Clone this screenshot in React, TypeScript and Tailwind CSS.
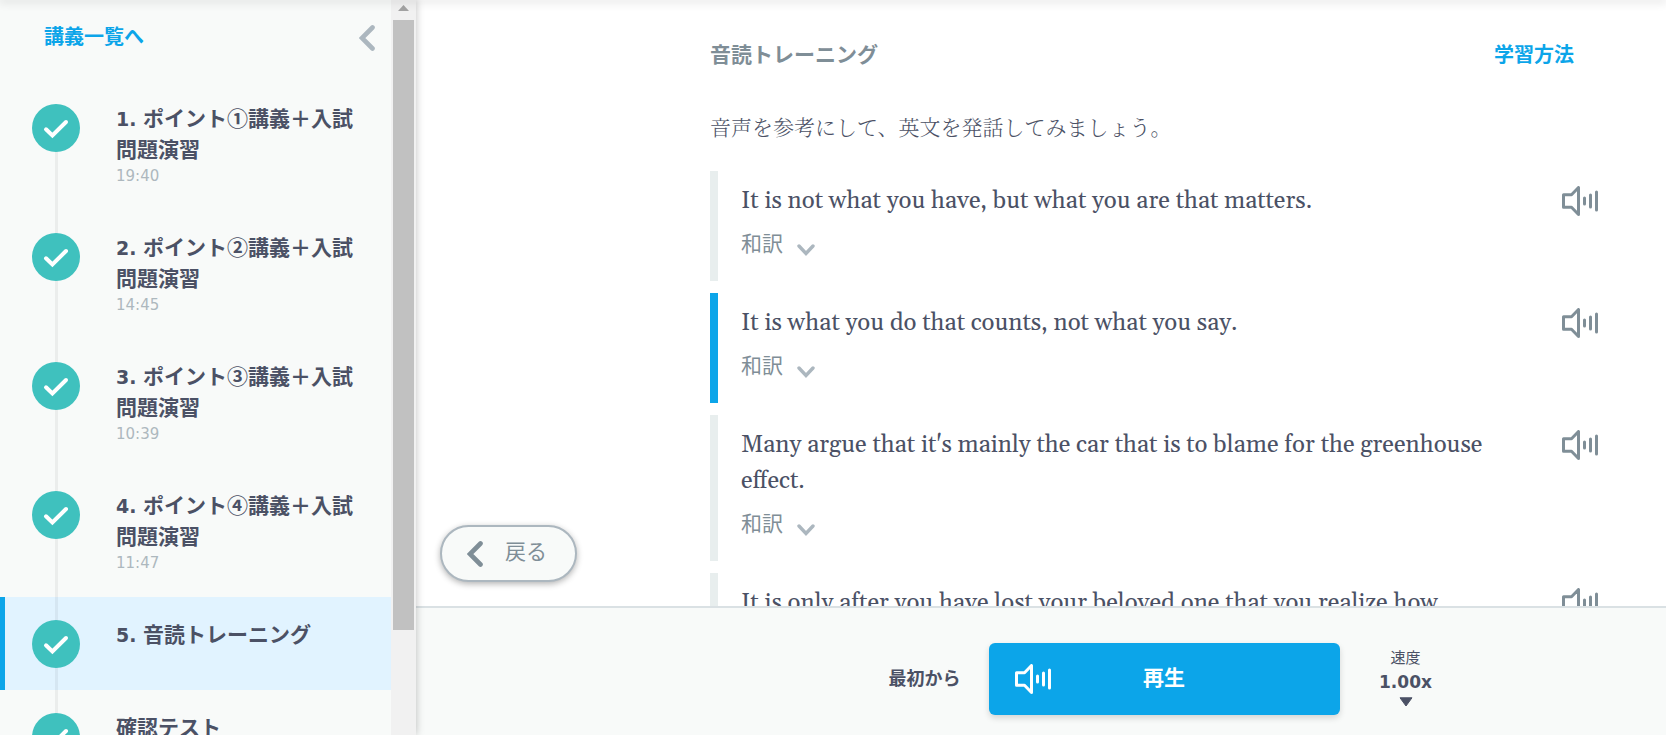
import { useState } from "react";
import clsx from "clsx";

type Lesson = {
  no?: string;
  title: string;
  time?: string;
  active?: boolean;
};

type Sentence = {
  text: string;
  translation: string;
};

const lessons: Lesson[] = [
  { no: "1.", title: "ポイント①講義＋入試問題演習", time: "19:40" },
  { no: "2.", title: "ポイント②講義＋入試問題演習", time: "14:45" },
  { no: "3.", title: "ポイント③講義＋入試問題演習", time: "10:39" },
  { no: "4.", title: "ポイント④講義＋入試問題演習", time: "11:47" },
  { no: "5.", title: "音読トレーニング", active: true },
  { title: "確認テスト" },
];

const sentences: Sentence[] = [
  {
    text: "It is not what you have, but what you are that matters.",
    translation: "和訳",
  },
  {
    text: "It is what you do that counts, not what you say.",
    translation: "和訳",
  },
  {
    text: "Many argue that it's mainly the car that is to blame for the greenhouse effect.",
    translation: "和訳",
  },
  {
    text: "It is only after you have lost your beloved one that you realize how",
    translation: "和訳",
  },
];

function SpeakerIcon({ className }: { className?: string }) {
  return (
    <svg
      viewBox="0 0 36 30"
      className={clsx("h-[30px] w-9 shrink-0", className)}
      fill="none"
      stroke="currentColor"
      strokeWidth="3"
      strokeLinecap="round"
      strokeLinejoin="round"
      aria-hidden="true">
      <path d="M16.5 1.5v27L9.5 21.3h-8V8.7h8z" />
      <path d="M22.5 12v6M28.5 9v12M34.5 6v18" />
    </svg>
  );
}

function ChevronLeftIcon({ className }: { className?: string }) {
  return (
    <svg
      viewBox="0 0 16 26"
      className={clsx("h-[26px] w-4 shrink-0", className)}
      fill="none"
      stroke="currentColor"
      strokeWidth="4.6"
      strokeLinecap="round"
      aria-hidden="true">
      <path d="M13.5 2.5 3 13l10.5 10.5" />
    </svg>
  );
}

function CheckBadge() {
  return (
    <svg viewBox="0 0 48 48" className="relative size-12" aria-hidden="true">
      <circle cx="24" cy="24" r="24" fill="#3fc1be" />
      <path
        d="M14 25.3 20.4 31.5 34 18"
        fill="none"
        stroke="#fff"
        strokeWidth="4"
        strokeLinecap="round"
      />
    </svg>
  );
}

function LessonItem({ lesson, first }: { lesson: Lesson; first: boolean }) {
  return (
    <li>
      <a
        href="#"
        className={clsx(
          "flex border-l-[5px]",
          lesson.time ? "min-h-[129px]" : "min-h-[93px]",
          lesson.active
            ? "border-[#0ca5e9] bg-[#e1f3ff]"
            : "border-transparent",
        )}>
        <div className="relative ml-[27px] w-12 shrink-0 pt-[23px]">
          <span
            className={clsx(
              "absolute bottom-0 left-[23px] w-[3px] bg-black/5",
              first ? "top-12" : "top-0",
            )}
          />
          <CheckBadge />
        </div>
        <div className="ml-9 flex-1 pt-[21px] pr-8">
          <p className="font-['Noto_Sans_CJK_JP',sans-serif] text-[21px] leading-[31px] font-bold text-[#4b5165]">
            {lesson.no && (
              <span className="font-['DejaVu_Sans',sans-serif] text-[19px] leading-none">
                {lesson.no}{" "}
              </span>
            )}
            {lesson.title}
          </p>
          {lesson.time && (
            <p className="text-[15px] leading-6 text-[#adb8be]">
              {lesson.time}
            </p>
          )}
        </div>
      </a>
    </li>
  );
}

export default function App() {
  const [current, setCurrent] = useState(1);
  const [speed, setSpeed] = useState("1.00x");

  return (
    <div className="relative flex h-screen overflow-hidden bg-white font-['DejaVu_Sans','Noto_Sans_CJK_JP',sans-serif] text-[#4b5165]">
      <div className="absolute inset-x-0 top-0 z-30 h-0 shadow-[0_0_10px_1px_rgba(0,0,0,0.3)]" />

      <aside className="z-10 flex w-[416px] shrink-0 bg-[#f8faf9] shadow-[0_0_8px_rgba(0,0,0,0.25)]">
        <div className="flex-1 overflow-hidden">
          <div className="flex h-[81px] items-start justify-between pt-5 pr-4 pl-11">
            <a
              href="#"
              className="text-xl leading-[34px] font-bold text-[#0ca5e9]">
              講義一覧へ
            </a>
            <button
              type="button"
              aria-label="閉じる"
              className="pt-[5px] text-[#acb7bf]">
              <ChevronLeftIcon />
            </button>
          </div>
          <ul>
            {lessons.map((lesson, idx) => (
              <LessonItem
                key={lesson.title}
                lesson={lesson}
                first={idx === 0}
              />
            ))}
          </ul>
        </div>
        <div className="flex w-[25px] flex-col items-center bg-[#f1f1f1]">
          <svg
            viewBox="0 0 25 20"
            className="h-5 w-full shrink-0"
            aria-hidden="true">
            <path d="M12.5 5 18 11H7z" fill="#a3a3a3" />
          </svg>
          <div className="mr-px h-[83%] w-[21px] bg-[#c1c1c1]" />
        </div>
      </aside>

      <div className="relative flex min-w-0 flex-1 flex-col">
        <main className="relative min-h-0 flex-1 overflow-hidden pr-[46px] pl-[294px]">
          <div className="flex items-center justify-between pt-[39px] pr-[46px]">
            <h1 className="text-[21px] leading-8 font-bold text-[#7f8e97]">
              音読トレーニング
            </h1>
            <a
              href="#"
              className="text-xl leading-8 font-bold text-[#0ca5e9]">
              学習方法
            </a>
          </div>
          <p className="mt-[37px] mb-[27px] font-['Noto_Serif_CJK_JP','Noto_Sans_CJK_JP',serif] text-[21px] leading-9 font-light">
            音声を参考にして、英文を発話してみましょう。
          </p>

          <ul className="space-y-3">
            {sentences.map((sentence, idx) => (
              <li
                key={sentence.text}
                className={clsx(
                  "flex items-start border-l-8 pt-3 pr-[22px] pb-5 pl-[23px]",
                  idx === current ? "border-[#0ca5e9]" : "border-[#e8eeee]",
                )}>
                <div className="flex-1 pr-12">
                  <p className="font-[Georgia,Gelasio,'Liberation_Serif',serif] text-2xl leading-9">
                    {sentence.text}
                  </p>
                  <button
                    type="button"
                    className="mt-2 flex items-center gap-[14px] text-[21px] leading-[34px] text-[#7f8e97]">
                    {sentence.translation}
                    <svg
                      viewBox="0 0 18 12"
                      className="mt-3 h-3 w-[18px]"
                      fill="none"
                      stroke="#acb7bf"
                      strokeWidth="3.4"
                      strokeLinecap="round"
                      aria-hidden="true">
                      <path d="m2 2 7 7.5L16 2" />
                    </svg>
                  </button>
                </div>
                <button
                  type="button"
                  aria-label="音声を再生"
                  onClick={() => setCurrent(idx)}
                  className="pt-[3px] text-[#7f8e97]">
                  <SpeakerIcon />
                </button>
              </li>
            ))}
          </ul>

          <button
            type="button"
            className="absolute bottom-6 left-6 flex h-[57px] w-[137px] items-center gap-[22px] rounded-full border-2 border-[#acb7bf] bg-[#f8faf9] pl-[25px] text-[21px] leading-8 text-[#7f8e97] shadow-[0_2px_6px_rgba(0,0,0,0.3)]">
            <ChevronLeftIcon />
            <span className="pb-1">戻る</span>
          </button>
        </main>

        <footer className="flex h-[129px] shrink-0 items-start justify-center border-t-2 border-[#dae1e4] bg-[#f8faf9] pt-[35px] pr-12 pl-[294px]">
          <div className="flex h-[72px] w-[130px] items-center justify-end pr-7">
            <button type="button" className="text-lg font-bold">
              最初から
            </button>
          </div>
          <button
            type="button"
            className="relative flex h-[72px] w-[351px] items-center justify-center rounded-md bg-[#0ca5e9] text-[21px] font-bold text-white shadow-[0_3px_6px_rgba(0,0,0,0.15)]">
            <SpeakerIcon className="absolute left-[26px]" />
            再生
          </button>
          <label className="flex w-[130px] flex-col items-center pt-[3px] pl-[2px] text-[15px] leading-6">
            速度
            <select
              value={speed}
              onChange={(e) => setSpeed(e.target.value)}
              className="appearance-none text-center text-[17px] leading-6 font-bold">
              <option>0.75x</option>
              <option>1.00x</option>
              <option>1.25x</option>
            </select>
            <svg
              viewBox="0 0 14 10"
              className="mt-[3px] h-[10px] w-[14px]"
              aria-hidden="true">
              <path
                d="M1 .8h12L7 9z"
                fill="currentColor"
                stroke="currentColor"
                strokeLinejoin="round"
              />
            </svg>
          </label>
        </footer>
      </div>
    </div>
  );
}
